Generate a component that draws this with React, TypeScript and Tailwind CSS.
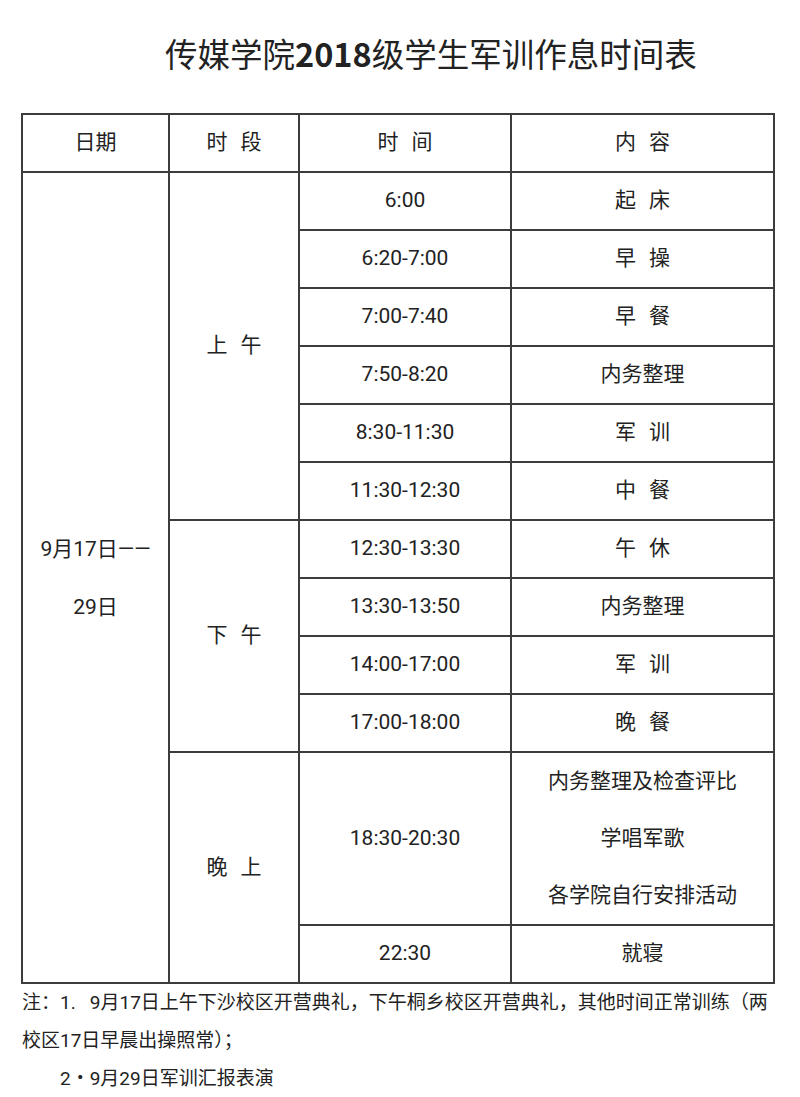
const rows: { time: string; content: string }[] = [
  { time: '6:00', content: '起 床' },
  { time: '6:20-7:00', content: '早 操' },
  { time: '7:00-7:40', content: '早 餐' },
  { time: '7:50-8:20', content: '内务整理' },
  { time: '8:30-11:30', content: '军 训' },
  { time: '11:30-12:30', content: '中 餐' },
  { time: '12:30-13:30', content: '午 休' },
  { time: '13:30-13:50', content: '内务整理' },
  { time: '14:00-17:00', content: '军 训' },
  { time: '17:00-18:00', content: '晚 餐' },
]

const cell = 'border-2 border-[#3c3c3c] text-center align-middle p-0'

// words written with a space between them are spread apart like in the printed sheet
function Spaced({ text }: { text: string }) {
  const parts = text.split(' ')
  if (parts.length === 1) return <>{text}</>
  return (
    <span className="inline-flex gap-[13px]">
      {parts.map((p, i) => (
        <span key={i}>{p}</span>
      ))}
    </span>
  )
}

export default function App() {
  return (
    <div className="w-[800px] h-[1097px] bg-white text-[#222] font-['Roboto','Noto_Sans_CJK_SC',sans-serif] overflow-hidden">
      {/* Title */}
      <div className="pt-[34px] pl-[165px] h-[113px]">
        <h1 className="text-[32.5px] leading-[38px] font-normal whitespace-nowrap font-['Noto_Sans_CJK_SC',sans-serif]">
          传媒学院<span className="font-bold">2018</span>级学生军训作息时间表
        </h1>
      </div>

      {/* Schedule table */}
      <div className="pl-[21px]">
        <table className="border-collapse table-fixed w-[752px] text-[21px]">
          <colgroup>
            <col className="w-[147px]" />
            <col className="w-[130px]" />
            <col className="w-[212px]" />
            <col className="w-[263px]" />
          </colgroup>
          <tbody>
            <tr>
              <td className={`${cell} h-[58px]`}>日期</td>
              <td className={cell}><Spaced text="时 段" /></td>
              <td className={cell}><Spaced text="时 间" /></td>
              <td className={cell}><Spaced text="内 容" /></td>
            </tr>
            {rows.map((r, i) => (
              <tr key={i}>
                {i === 0 && (
                  <td rowSpan={13} className={cell}>
                    <div className="leading-[58px]">9月17日——</div>
                    <div className="leading-[58px]">29日</div>
                  </td>
                )}
                {i === 0 && (
                  <td rowSpan={6} className={cell}>
                    <Spaced text="上 午" />
                  </td>
                )}
                {i === 6 && (
                  <td rowSpan={4} className={cell}>
                    <Spaced text="下 午" />
                  </td>
                )}
                <td className={`${cell} h-[58px]`}>{r.time}</td>
                <td className={cell}><Spaced text={r.content} /></td>
              </tr>
            ))}
            <tr>
              <td rowSpan={2} className={cell}>
                <Spaced text="晚 上" />
              </td>
              <td className={`${cell} h-[171px]`}>18:30-20:30</td>
              <td className={cell}>
                <div className="leading-[57px]">内务整理及检查评比</div>
                <div className="leading-[57px]">学唱军歌</div>
                <div className="leading-[57px]">各学院自行安排活动</div>
              </td>
            </tr>
            <tr>
              <td className={`${cell} h-[58px]`}>22:30</td>
              <td className={cell}>就寝</td>
            </tr>
          </tbody>
        </table>
      </div>

      {/* Notes */}
      <div className="pl-[22px] text-[19px] leading-[38px] whitespace-nowrap">
        <div>注：1.&nbsp;&nbsp;&nbsp;9月17日上午下沙校区开营典礼，下午桐乡校区开营典礼，其他时间正常训练（两</div>
        <div>校区17日早晨出操照常）；</div>
        <div className="pl-[38px]">2・9月29日军训汇报表演</div>
      </div>
    </div>
  )
}
